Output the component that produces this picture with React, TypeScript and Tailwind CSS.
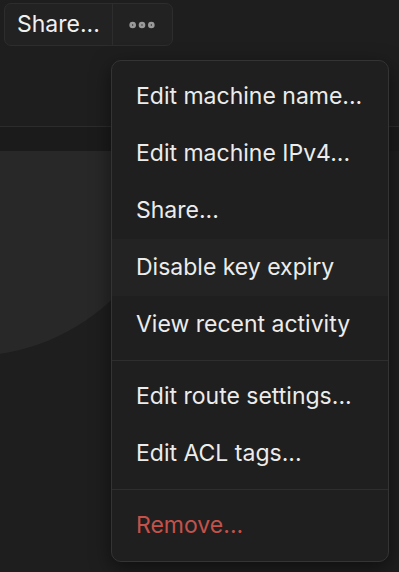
import { MoreHorizontal } from 'lucide-react'

const groups = [
  ['Edit machine name...', 'Edit machine IPv4...', 'Share...', 'Disable key expiry', 'View recent activity'],
  ['Edit route settings...', 'Edit ACL tags...'],
]

export default function App() {
  return (
    <div
      className="relative flex h-[572px] w-[399px] flex-col overflow-hidden bg-[#1e1e1e] text-[#ececec]"
      style={{ fontFamily: 'Inter, "Noto Sans", sans-serif' }}
    >
      {/* page behind the menu */}
      <header className="h-[127px] border-b border-[#2c2c2c] pl-[4px] pt-[3px]">
        <div className="flex h-[43px] w-fit rounded-[7px] border border-[#2d2d2d] bg-[#222222]">
          <button className="pl-[12px] pr-[12px] text-[23px] leading-none text-[#f0f0f0]">Share...</button>
          <div className="w-px bg-[#2d2d2d]" />
          <button className="flex w-[59px] items-center justify-center text-[#9a9a9a]">
            <MoreHorizontal size={32} strokeWidth={3} />
          </button>
        </div>
      </header>
      <div className="h-[24px] bg-[#1b1b1b]" />
      <div className="relative flex-1 overflow-hidden">
        <div className="absolute left-[-237px] top-[-209px] h-[414px] w-[414px] rounded-full bg-[#282828]" />
      </div>

      {/* dropdown */}
      <div className="absolute left-[111px] top-[60px] w-[278px] rounded-[10px] border border-[#343434] bg-[#1f1f1f] py-[7px] shadow-[0_6px_20px_rgba(0,0,0,0.5)]">
        {groups.map((items, gi) => (
          <div key={gi}>
            {items.map((label) => (
              <div
                key={label}
                className={`flex h-[57px] items-center px-[24px] text-[23px] ${
                  label === 'Disable key expiry' ? 'bg-[#232323]' : ''
                }`}
              >
                {label}
              </div>
            ))}
            <div className="my-[7px] h-px bg-[#2e2e2e]" />
          </div>
        ))}
        <div className="flex h-[57px] items-center px-[24px] text-[23px] text-[#c4524a]">Remove...</div>
      </div>
    </div>
  )
}
